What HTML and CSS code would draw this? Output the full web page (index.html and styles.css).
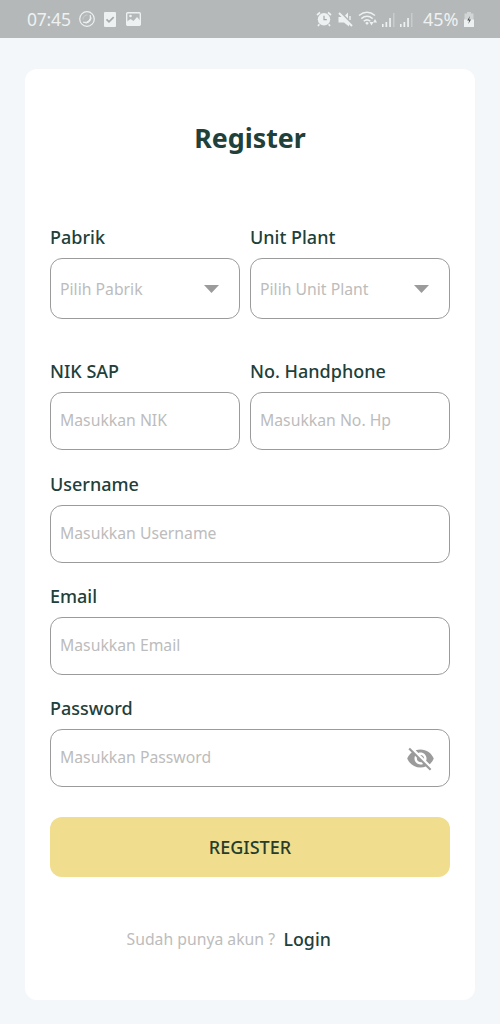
FILE: index.html
```html
<!DOCTYPE html>
<html lang="id">
<head>
<meta charset="utf-8">
<title>Register</title>
<link rel="stylesheet" href="styles.css">
</head>
<body>
<header class="status">
  <span class="clock">07:45</span>
  <svg class="s-ring" width="16" height="16" viewBox="0 0 16 16" fill="none" stroke="currentColor"><circle cx="8" cy="8" r="7.300" stroke-width="1.200"/><path d="M11.200 4.300A5 5 0 0 1 4.300 11.200A5.600 5.600 0 0 0 11.200 4.300z" stroke-width="1" fill="currentColor"/><path d="M4 8.500A4.200 4.200 0 0 1 8.500 4" stroke-width=".6" opacity=".6"/></svg>
  <svg class="s-check" width="12" height="15" viewBox="0 0 12 15"><rect width="12" height="15" rx="1" fill="currentColor"/><path d="M2.500 7.300l2.500 2.500L9.700 5.200" fill="none" stroke="#a4a9a9" stroke-width="1.700"/></svg>
  <svg class="s-image" width="15" height="14" viewBox="0 0 15 14"><rect x=".7" y=".7" width="13.600" height="12.600" rx="1" fill="none" stroke="currentColor" stroke-width="1.400"/><path d="M1 13V9.500L4.500 7l3 2L11 5l3.500 4v4z" fill="currentColor"/><circle cx="4.500" cy="4" r="1.300" fill="currentColor"/></svg>
  <span class="spacer"></span>
  <svg class="s-alarm" width="16" height="16" viewBox="0 0 16 16"><path d="M1 4L4 1.500M12 1.500L15 4M3.300 13.200L2 15M12.700 13.200L14 15" stroke="currentColor" stroke-width="1.700"/><circle cx="8" cy="8.300" r="6.200" fill="currentColor"/><path d="M8 4.700v4h2.800" fill="none" stroke="#a4a9a9" stroke-width="1.200"/></svg>
  <svg class="s-mute" width="15" height="15" viewBox="0 0 15 15"><path d="M.5 5h4l6.500 6.500v3L6 10.500H.5zM7 3.500L10 .5v6z" fill="currentColor"/><path d="M1 1l13 13" stroke="currentColor" stroke-width="1.900"/><path d="M12 4v4" stroke="currentColor" stroke-width="1.400"/></svg>
  <svg class="s-wifi" width="20" height="16" viewBox="0 0 20 16" fill="none" stroke="currentColor" stroke-width="1.500"><path d="M1 4.500Q9 -2 17 4.500M3.300 7.600Q9 3 14.700 7.600M5.700 10.300Q9 7.500 12.300 10.300"/><path d="M7.200 12l1.800-1.300 1.800 1.300L9 14z" fill="currentColor" stroke="none"/><path d="M11.500 11h4l-2 3.500zM15 11.500h4l-2-3.500z" fill="currentColor" stroke="none"/></svg>
  <svg class="s-signal" width="13" height="14" viewBox="0 0 13 14" fill="currentColor"><path d="M0 11h1.600v3H0zM3.500 9h1.700v5H3.500zM7.200 5h1.700v9H7.200z"/><path d="M11 0h1.500v14H11z" opacity=".35"/></svg>
  <svg class="s-signal s-signal2" width="13" height="14" viewBox="0 0 13 14" fill="currentColor"><path d="M0 11h1.600v3H0zM3.500 9h1.700v5H3.500zM7.200 5h1.700v9H7.200z"/><path d="M11 0h1.500v14H11z" opacity=".35"/></svg>
  <span class="percent">45%</span>
  <svg class="s-battery" width="10" height="15" viewBox="0 0 10 15"><path d="M3 0h4v1.500h2.500V8H.5V1.500H3z" fill="currentColor" opacity=".5"/><path d="M0 7.500h10V15H0z" fill="currentColor"/><path d="M6 4L3.200 8.500h2L4.300 12 7 7.500H5z" fill="#4c5050"/></svg>
</header>
<main class="card">
  <h1 class="title">Register</h1>
  <form class="form">
    <div class="row row-select">
      <div class="field"><span class="label">Pabrik</span>
        <div class="box box-select"><span>Pilih Pabrik</span><svg width="15" height="8" viewBox="0 0 15 8"><path d="M0 0h15L7.500 8z" fill="#9b9b9b"/></svg></div></div>
      <div class="field"><span class="label">Unit Plant</span>
        <div class="box box-select"><span>Pilih Unit Plant</span><svg width="15" height="8" viewBox="0 0 15 8"><path d="M0 0h15L7.500 8z" fill="#9b9b9b"/></svg></div></div>
    </div>
    <div class="row">
      <div class="field"><span class="label">NIK SAP</span><div class="box"><span>Masukkan NIK</span></div></div>
      <div class="field"><span class="label">No. Handphone</span><div class="box"><span>Masukkan No. Hp</span></div></div>
    </div>
    <div class="field"><span class="label">Username</span><div class="box"><span>Masukkan Username</span></div></div>
    <div class="field"><span class="label">Email</span><div class="box"><span>Masukkan Email</span></div></div>
    <div class="field"><span class="label">Password</span>
      <div class="box box-password"><span>Masukkan Password</span><svg width="29" height="29" viewBox="0 0 24 24" fill="#9b9b9b"><path d="M12 7c2.760 0 5 2.240 5 5 0 .65-.13 1.260-.36 1.830l2.920 2.920c1.510-1.260 2.700-2.890 3.430-4.750-1.730-4.390-6-7.500-11-7.500-1.400 0-2.740.25-3.980.7l2.160 2.160C10.740 7.130 11.350 7 12 7zM2 4.270l2.280 2.280.46.46C3.080 8.300 1.780 10.020 1 12c1.730 4.390 6 7.500 11 7.500 1.550 0 3.030-.3 4.380-.84l.42.42L19.730 22 21 20.730 3.270 3 2 4.270zM7.530 9.800l1.550 1.550c-.05.21-.08.43-.08.65 0 1.660 1.340 3 3 3 .22 0 .44-.03.65-.08l1.550 1.550c-.67.33-1.410.53-2.200.53-2.760 0-5-2.240-5-5 0-.79.200-1.530.53-2.200zm4.310-.78l3.150 3.150.02-.16c0-1.660-1.340-3-3-3l-.17.01z"/></svg></div></div>
    <button class="submit" type="button">REGISTER</button>
  </form>
  <p class="footer"><span class="question">Sudah punya akun ?</span><a class="login">Login</a></p>
</main>
</body>
</html>
```
FILE: styles.css
```css
* { box-sizing: border-box; }
body {
  margin: 0;
  height: 1024px;
  overflow: hidden;
  background: #f3f7fa;
  font-family: "Noto Sans", sans-serif;
  color: #21403a;
}
svg { display: block; flex: none; }
.status {
  display: flex;
  align-items: center;
  height: 38px;
  padding: 0 26px 0 27px;
  background: #b4b8b8;
  color: #eef1f1;
}
.clock, .percent { font-size: 17.5px; line-height: 24px; white-space: nowrap; }
.clock { width: 52px; letter-spacing: -.2px; }
.s-check { margin-left: 9px; }
.s-image { margin-left: 10px; }
.spacer { flex: 1; }
.s-mute { margin-left: 6px; }
.s-wifi { margin-left: 5px; }
.s-signal { margin: 2px 0 0 4px; }
.s-signal2 { margin-left: 5px; }
.percent { margin-left: 10px; width: 36px; font-size: 18px; }
.s-battery { margin-left: 5px; }
.card {
  margin: 31px 25px 0;
  height: 931px;
  padding: 50px 25px 0;
  border-radius: 12px;
  background: #fff;
}
.title {
  margin: 0 0 68px;
  font-size: 26.8px;
  font-weight: 700;
  line-height: 38px;
  text-align: center;
}
.form { display: flex; flex-direction: column; gap: 21.25px; }
.row { display: grid; grid-template-columns: 190px 200px; gap: 10px; }
.row-select { margin-bottom: 19px; }
.field { display: flex; flex-direction: column; gap: 8px; }
.label { font-size: 18px; font-weight: 500; line-height: 25px; }
.box {
  display: flex;
  align-items: center;
  height: 58px;
  padding: 0 9px 2px;
  border: 1px solid #9b9b9b;
  border-radius: 12px;
  color: #bcbcbc;
  font-size: 15.75px;
  line-height: 22px;
}
.box-select { height: 61px; justify-content: space-between; padding: 0 20px 0 9px; }
.box-password { justify-content: space-between; padding: 0 14px 0 9px; }
.box-password span { margin-bottom: 2px; }
.submit {
  margin: 8.75px 0 0;
  padding: 0;
  height: 60px;
  border: 0;
  border-radius: 12px;
  background: #f0de8e;
  color: #263c2c;
  font: 500 18px/60px "Noto Sans", sans-serif;
}
.footer {
  display: flex;
  align-items: center;
  margin: 49px 0 0 76.5px;
  line-height: 26px;
}
.question { font-size: 15.75px; color: #bcbcbc; }
.login { margin-left: 8.5px; font-size: 17.8px; font-weight: 500; }
```
